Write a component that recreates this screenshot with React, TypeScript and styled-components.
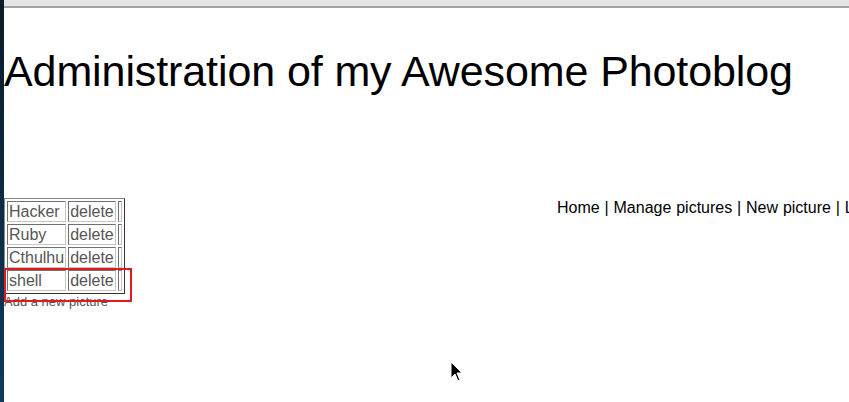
import React from "react";
import styled, { createGlobalStyle } from "styled-components";

const Global = createGlobalStyle`
  html, body { margin: 0; padding: 0; background: #fff; overflow: hidden; }
  body { width: 849px; height: 402px; font-family: "Liberation Sans", Arial, sans-serif; }
`;

const Frame = styled.div`
  display: flex;
  width: 849px;
  height: 402px;
  overflow: hidden;
  position: relative;
`;

const SideStrip = styled.div`
  width: 4px;
  flex: none;
  background: linear-gradient(#0b1b28, #0e3b5f);
`;

const Main = styled.div`
  flex: 1;
  display: flex;
  flex-direction: column;
  min-width: 0;
`;

const TopBar = styled.div`
  height: 6px;
  background: #e4e4e4;
  border-bottom: 2px solid #a2a2a2;
  flex: none;
`;

const Title = styled.h1`
  margin: 38px 0 0 0;
  font-weight: normal;
  font-size: 43px;
  line-height: 50px;
  letter-spacing: -0.1px;
  color: #000;
  white-space: nowrap;
`;

const ContentRow = styled.div`
  display: flex;
  align-items: flex-start;
  margin-top: 102px;
`;

const Left = styled.div`
  display: flex;
  flex-direction: column;
  width: 553px;
  flex: none;
`;

const Table = styled.table`
  border: 1px outset #888;
  border-spacing: 2px;
  border-collapse: separate;
  align-self: flex-start;
`;

const Cell = styled.td<{ $empty?: boolean }>`
  border: 1px inset #c4c4c4;
  padding: 0 1px;
  font-size: 16px;
  line-height: 19px;
  color: #555;
  width: ${(p) => (p.$empty ? "0" : "auto")};
`;

const AddLink = styled.a`
  font-size: 13px;
  line-height: 15px;
  color: #555;
  text-decoration: none;
`;

const Nav = styled.nav`
  font-size: 16px;
  line-height: 19px;
  color: #000;
  white-space: nowrap;
  word-spacing: 0.4px;
`;

const Highlight = styled.div`
  position: absolute;
  left: 4px;
  top: 268px;
  width: 124px;
  height: 30px;
  border: 2px solid #e01b1b;
  pointer-events: none;
`;

const Cursor = styled.svg`
  position: absolute;
  left: 450px;
  top: 361px;
`;

const rows = ["Hacker", "Ruby", "Cthulhu", "shell"];

export default function App() {
  return (
    <>
      <Global />
      <Frame>
        <SideStrip />
        <Main>
          <TopBar />
          <Title>Administration of my Awesome Photoblog</Title>
          <ContentRow>
            <Left>
              <Table>
                <tbody>
                  {rows.map((r) => (
                    <tr key={r}>
                      <Cell>{r}</Cell>
                      <Cell>delete</Cell>
                      <Cell $empty />
                    </tr>
                  ))}
                </tbody>
              </Table>
              <AddLink href="#">Add a new picture</AddLink>
            </Left>
            <Nav>Home | Manage pictures | New picture | Logout</Nav>
          </ContentRow>
        </Main>
        <Highlight />
        <Cursor width="14" height="22" viewBox="0 0 14 22">
          <path d="M1 1 L1 17 L5 13 L8 20 L10 19 L7 12 L12 12 Z" fill="#000" stroke="#fff" strokeWidth="1" />
        </Cursor>
      </Frame>
    </>
  );
}
